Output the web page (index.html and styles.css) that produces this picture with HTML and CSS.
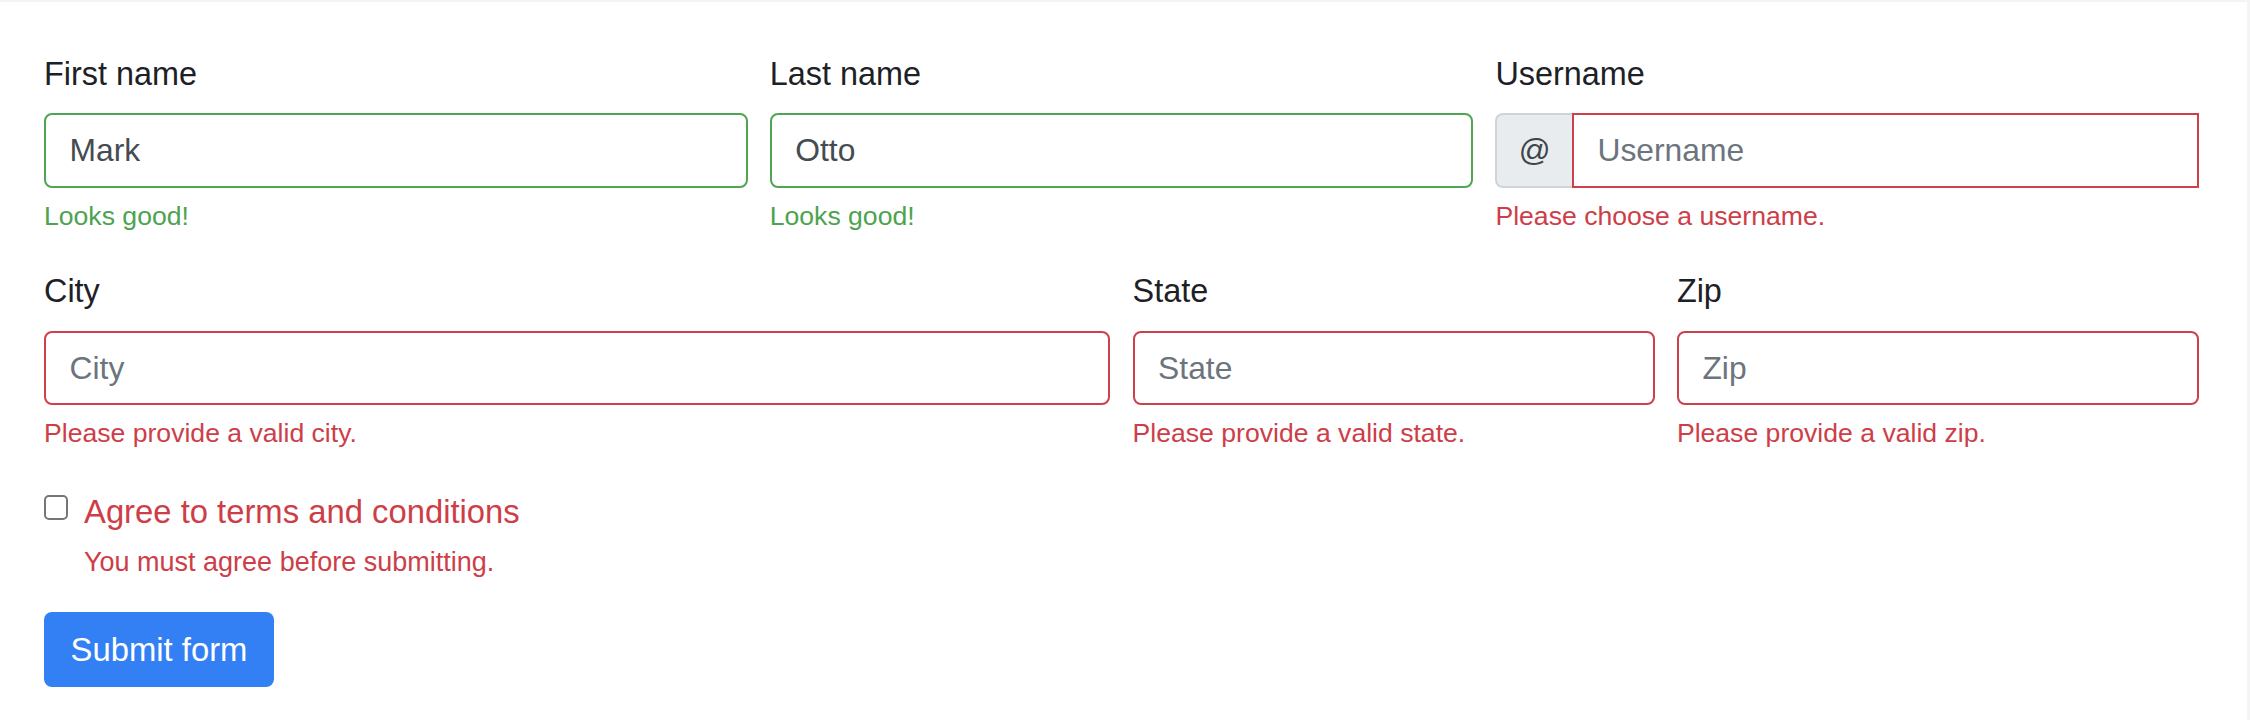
FILE: index.html
```html
<!DOCTYPE html>
<html lang="en">
<head>
<meta charset="utf-8">
<title>Validation form</title>
<link rel="stylesheet" href="styles.css">
</head>
<body>
<div class="page">
  <form class="form" novalidate>
    <div class="row">
      <div class="col col-4">
        <label class="label" for="fn">First name</label>
        <input class="control valid" id="fn" type="text" value="Mark">
        <div class="feedback ok">Looks good!</div>
      </div>
      <div class="col col-4">
        <label class="label" for="ln">Last name</label>
        <input class="control valid" id="ln" type="text" value="Otto">
        <div class="feedback ok">Looks good!</div>
      </div>
      <div class="col col-4">
        <label class="label" for="un">Username</label>
        <div class="group">
          <span class="addon">@</span>
          <input class="control invalid" id="un" type="text" placeholder="Username">
        </div>
        <div class="feedback bad">Please choose a username.</div>
      </div>
    </div>
    <div class="row">
      <div class="col col-6">
        <label class="label" for="city">City</label>
        <input class="control invalid" id="city" type="text" placeholder="City">
        <div class="feedback bad">Please provide a valid city.</div>
      </div>
      <div class="col col-3">
        <label class="label" for="state">State</label>
        <input class="control invalid" id="state" type="text" placeholder="State">
        <div class="feedback bad">Please provide a valid state.</div>
      </div>
      <div class="col col-3">
        <label class="label" for="zip">Zip</label>
        <input class="control invalid" id="zip" type="text" placeholder="Zip">
        <div class="feedback bad">Please provide a valid zip.</div>
      </div>
    </div>
    <div class="check-block">
      <div class="check">
        <input class="checkbox" id="agree" type="checkbox">
        <label class="check-label" for="agree">Agree to terms and conditions</label>
      </div>
      <div class="feedback bad check-feedback">You must agree before submitting.</div>
    </div>
    <div class="actions">
      <button class="submit" type="button">Submit form</button>
    </div>
  </form>
</div>
</body>
</html>
```
FILE: styles.css
```css
html, body {
  margin: 0;
  background: #ffffff;
}

body {
  font-family: "Liberation Sans", Arial, sans-serif;
  color: #212529;
}

.page {
  box-sizing: border-box;
  height: 720px;
  border-top: 2px solid #f4f4f4;
  border-right: 3px solid #f4f4f4;
  padding: 48.6px 48px 0 44px;
}

.row {
  display: flex;
  margin: 0 -11.1px;
}

.row + .row {
  margin-top: 31.4px;
}

.col {
  box-sizing: border-box;
  padding: 0 11.1px;
}

.col-4 { width: 33.3333%; }
.col-6 { width: 50%; }
.col-3 { width: 25%; }

.label {
  display: block;
  font-size: 32.4px;
  line-height: 47.04px;
  margin-bottom: 15.68px;
  color: #1d2125;
}

.control {
  display: block;
  box-sizing: border-box;
  width: 100%;
  height: 74.5px;
  margin: 0;
  padding: 0 23.52px;
  border: 2px solid #ced4da;
  border-radius: 8px;
  background: #ffffff;
  font-family: "Liberation Sans", Arial, sans-serif;
  font-size: 31.8px;
  line-height: 47.04px;
  color: #464b52;
  outline: none;
}

.control::placeholder {
  color: #6c757d;
  opacity: 1;
}

.valid { border-color: #50a552; }
.invalid { border-color: #ce404a; }

.group {
  display: flex;
}

.addon {
  box-sizing: border-box;
  flex: none;
  width: 76.5px;
  height: 74.5px;
  display: flex;
  align-items: center;
  justify-content: center;
  background: #e9ecef;
  border: 2px solid #ced4da;
  border-right: 0;
  border-radius: 8px 0 0 8px;
  font-size: 31.36px;
  color: #3f444a;
}

.group .control {
  flex: 1;
  width: auto;
  min-width: 0;
  border-radius: 0;
}

.feedback {
  margin-top: 7.84px;
  font-size: 26.6px;
  line-height: 41.16px;
}

.ok { color: #4da34f; }
.bad { color: #cd3e48; }

.check-block {
  margin-top: 33.5px;
}

.check {
  display: flex;
  align-items: flex-start;
}

.checkbox {
  appearance: none;
  -webkit-appearance: none;
  box-sizing: border-box;
  flex: none;
  width: 24px;
  height: 25px;
  margin: 7.6px 0 0 0;
  border: 2px solid #767676;
  border-radius: 5px;
  background: #ffffff;
}

.check-label {
  margin-left: 16px;
  font-size: 32.8px;
  line-height: 47.04px;
  color: #cd3e48;
}

.check-feedback {
  margin-top: 7px;
  padding-left: 40px;
  font-size: 27px;
}

.actions {
  margin-top: 28.9px;
}

.submit {
  box-sizing: border-box;
  height: 75px;
  padding: 0 26.6px;
  border: 0;
  border-radius: 8px;
  background: #3380f5;
  color: #ffffff;
  font-family: "Liberation Sans", Arial, sans-serif;
  font-size: 32.8px;
  line-height: 47.04px;
}
```
